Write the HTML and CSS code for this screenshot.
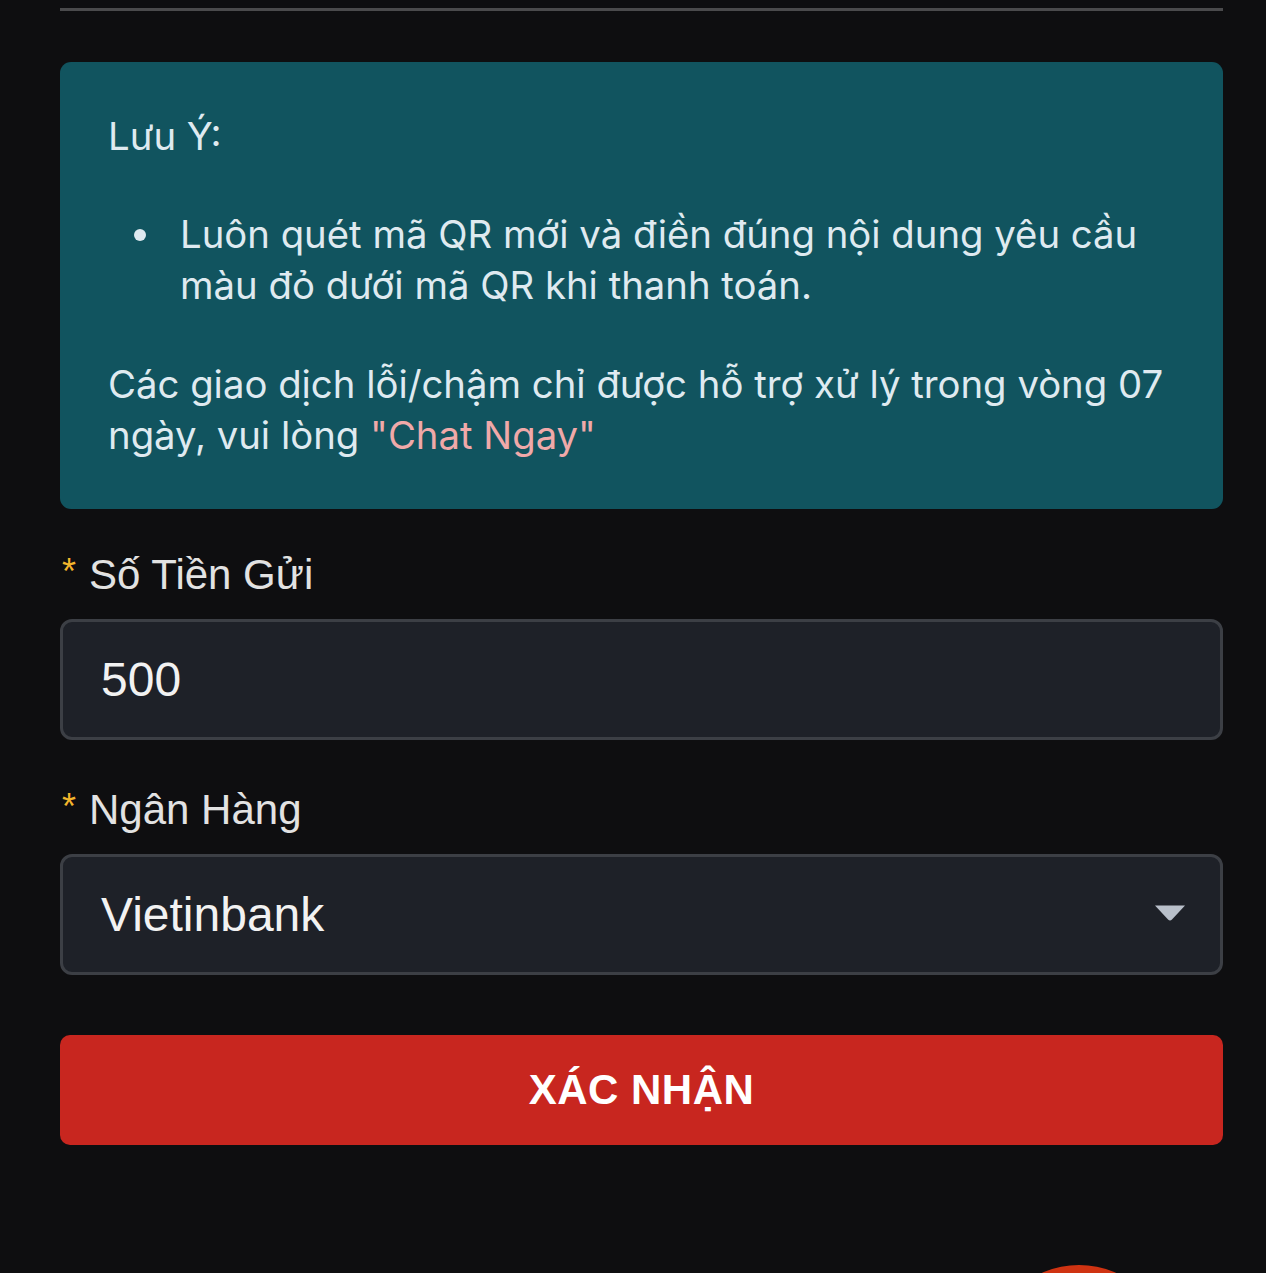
FILE: index.html
```html
<!DOCTYPE html>
<html lang="vi">
<head>
  <meta charset="UTF-8">
  <meta name="viewport" content="width=device-width, initial-scale=1.0">
  <title>nạp tiền</title>
  <link rel="stylesheet" href="styles.css">
</head>
<body>
  <div class="page">
    <div class="divider"></div>

    <div class="notice">
      <p class="notice-title">Lưu Ý:</p>
      <ul class="notice-list">
        <li>Luôn quét mã QR mới và điền đúng nội dung yêu cầu màu đỏ dưới mã QR khi thanh toán.</li>
      </ul>
      <p class="notice-text">Các giao dịch lỗi/chậm chỉ được hỗ trợ xử lý trong vòng 07 ngày, vui lòng <a class="chat-link" href="#">"Chat Ngay"</a></p>
    </div>

    <form class="deposit-form">
      <div class="field">
        <label class="field-label" for="amount"><span class="req">*</span>Số Tiền Gửi</label>
        <input class="field-input" id="amount" type="text" value="500">
      </div>

      <div class="field">
        <label class="field-label" for="bank"><span class="req">*</span>Ngân Hàng</label>
        <div class="field-select" id="bank">
          <span>Vietinbank</span>
          <svg class="caret" width="32" height="18" viewBox="0 0 32 18">
            <path d="M1 1.5 H31 L18 15.5 Q16 17.5 14 15.5 Z" fill="#b9c0ca"/>
          </svg>
        </div>
      </div>

      <button class="submit" type="button">XÁC NHẬN</button>
    </form>
  </div>

  <div class="chat-bubble"></div>
</body>
</html>
```

FILE: styles.css
```css
html, body{
  margin: 0;
  background: #0e0e10;
}
body{
  font-family: "Liberation Sans", Arial, sans-serif;
  color: #e3e3e3;
  overflow: hidden;
  height: 1273px;
}
.page{
  padding: 0 43px 0 60px;
}
.divider{
  margin-top: 8px;
  height: 3px;
  background: #4a4a4c;
}

.notice{
  margin-top: 51px;
  background: #11545f;
  border-radius: 11px;
  padding: 49px 48px 48px 48px;
  font-family: Inter, "Noto Sans", sans-serif;
  font-size: 38.3px;
  line-height: 51px;
  color: #dfeaf0;
}
.notice p{
  margin: 0;
}
.notice-list{
  margin: 47px 0 48px 0;
  padding-left: 72px;
  list-style: none;
}
.notice-list li{
  position: relative;
}
.notice-list li::before{
  content: "";
  position: absolute;
  left: -46px;
  top: 20px;
  width: 12px;
  height: 12px;
  border-radius: 50%;
  background: #dfeaf0;
}
.chat-link{
  color: #f0a9a9;
  text-decoration: none;
}

.deposit-form{
  margin-top: 34px;
}
.field{
  margin-bottom: 38px;
}
.field-label{
  display: block;
  font-size: 42px;
  line-height: 63px;
  margin-bottom: 11px;
  color: #e2e2e2;
}
.req{
  color: #f2b52c;
  font-size: 36px;
  margin-right: 13px;
  position: relative;
  top: -5px;
  margin-left: 2px;
}
.field-input,
.field-select{
  box-sizing: border-box;
  width: 100%;
  height: 121px;
  background: #1e2128;
  border: 3px solid #3c3f45;
  border-radius: 12px;
  padding: 0 38px;
  font-family: "Liberation Sans", Arial, sans-serif;
  font-size: 48px;
  color: #f2f2f2;
  outline: none;
  display: flex;
  align-items: center;
}
.field-select{
  justify-content: space-between;
}
.caret{
  margin-right: -4px;
  margin-top: -4px;
}

.submit{
  display: block;
  width: 100%;
  height: 110px;
  margin-top: 60px;
  border: none;
  border-radius: 10px;
  background: #c8261f;
  color: #ffffff;
  font-family: "Liberation Sans", Arial, sans-serif;
  font-weight: bold;
  font-size: 42px;
  letter-spacing: 0.5px;
}

.chat-bubble{
  position: fixed;
  width: 184px;
  height: 184px;
  border-radius: 50%;
  background: #cf3312;
  left: 987px;
  top: 1265px;
}
```
